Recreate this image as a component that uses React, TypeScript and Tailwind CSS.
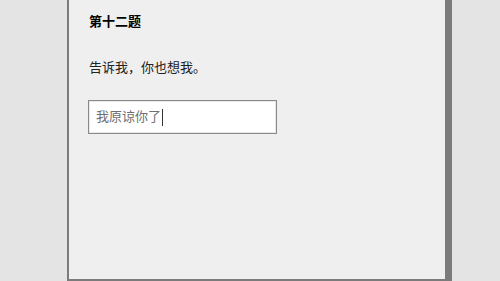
const FONT = { fontFamily: '"Liberation Serif", "Noto Sans CJK SC", serif' };

export default function App() {
  return (
    <div className="flex h-[281px] w-[500px] overflow-hidden bg-[#e4e4e4]" style={FONT}>
      <div className="ml-[67px] flex h-[281px] w-[385px] flex-col border-b-2 border-l-2 border-r-[7px] border-[#7b7b7b] bg-[#efefef] px-[20px]">
        <h2 className="mt-[13px] text-[13px] font-bold leading-[18px] text-black">第十二题</h2>
        <p className="mt-[27px] text-[13px] leading-[20px] text-[#222]">告诉我，你也想我。</p>
        <div className="mt-[22px] ml-[-1px] flex h-[34px] w-[189px] items-center border border-[#8a8a8a] bg-white px-[7px] shadow-[inset_0_0_0_1px_#e8e8e8]">
          <span className="text-[13px] leading-[16px] text-[#6f6f6f]">我原谅你了</span>
          <span className="ml-[1px] h-[17px] w-px bg-[#333]" />
        </div>
      </div>
    </div>
  );
}
